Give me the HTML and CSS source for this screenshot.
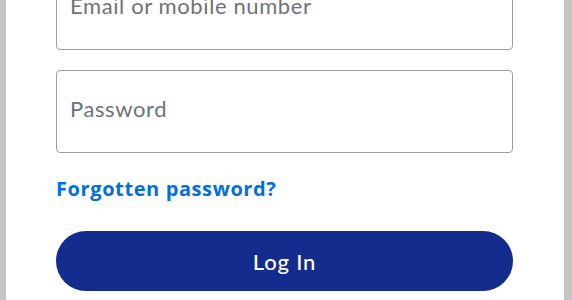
FILE: index.html
```html
<!DOCTYPE html>
<html lang="en">
<head>
<meta charset="utf-8">
<title>Log in</title>
<link rel="stylesheet" href="styles.css">
</head>
<body>
<div class="card">
  <form class="form">
    <input class="field field-first" type="text" placeholder="Email or mobile number">
    <input class="field" type="password" placeholder="Password">
    <a class="forgot" href="#">Forgotten password?</a>
    <button class="login" type="button">Log In</button>
  </form>
</div>
</body>
</html>
```
FILE: styles.css
```css
html, body {
  margin: 0;
  padding: 0;
  height: 100%;
  background: #c4c4c4;
  overflow: hidden;
}
.card {
  margin: 0 8px 0 6px;
  height: 100%;
  background: #ffffff;
  padding: 0 50px;
}
.form {
  display: flex;
  flex-direction: column;
  width: 457px;
}
.field {
  box-sizing: border-box;
  height: 83px;
  width: 100%;
  border: 1px solid #9a9ea3;
  border-radius: 4px;
  padding: 0 13px 6px;
  font-family: Lato, "Open Sans", sans-serif;
  font-size: 22px;
  letter-spacing: 0.6px;
  color: #2c2e2f;
  background: #fff;
  margin-bottom: 20px;
  outline: none;
}
.field-first {
  margin-top: -33px;
}
.field::placeholder {
  color: #6c7378;
}
.forgot {
  font-family: "Open Sans", sans-serif;
  font-weight: 700;
  font-size: 20px;
  letter-spacing: 0.6px;
  color: #0070e0;
  text-decoration: none;
  line-height: 26px;
  margin-top: 3px;
  align-self: flex-start;
}
.login {
  margin-top: 29px;
  height: 60px;
  width: 100%;
  border: none;
  border-radius: 30px;
  background: #142c8e;
  color: #ffffff;
  font-family: Lato, "Open Sans", sans-serif;
  font-size: 22px;
  letter-spacing: 0.8px;
  font-weight: 500;
}
```
